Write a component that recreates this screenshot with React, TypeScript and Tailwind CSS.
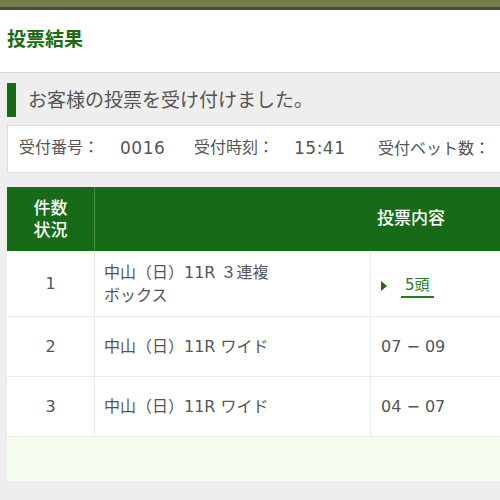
const rows = [
  { no: '1', race: '中山（日）11R ３連複', sub: 'ボックス', box: true, bet: '5頭', h: 'h-[66px]' },
  { no: '2', race: '中山（日）11R ワイド', bet: '07 − 09', h: 'h-[60px]' },
  { no: '3', race: '中山（日）11R ワイド', bet: '04 − 07', h: 'h-[60px]' },
];

export default function App() {
  return (
    <div
      className="w-[500px] h-[500px] overflow-hidden bg-[#eeeeee] text-[#555555]"
      style={{ fontFamily: '"DejaVu Sans", "Noto Sans CJK JP", sans-serif' }}
    >
      {/* top strip */}
      <div className="h-[10px] bg-[#777c4e] border-b-[3px] border-[#4a4b3d]" />

      {/* page title */}
      <div className="h-[63px] bg-white border-b border-[#d9d9d9] flex items-center px-[7px] pb-[3px]">
        <h1 className="text-[19px] font-bold text-[#1d6a12]">投票結果</h1>
      </div>

      <div className="w-[760px] pl-[7px]">
        {/* notice */}
        <div className="flex items-center mt-[10px] h-[34px]">
          <div className="w-[9px] h-[34px] bg-[#176a16]" />
          <p className="ml-[12px] text-[19px] leading-none">お客様の投票を受け付けました。</p>
        </div>

        {/* receipt info */}
        <div className="mt-[8px] h-[48px] bg-white border border-[#dddddd] flex items-center pl-[11px] text-[16px]">
          <div className="w-[175px] flex">
            <span className="w-[101px]">受付番号：</span>
            <span className="text-[17px] tracking-[0.5px]">0016</span>
          </div>
          <div className="w-[184px] flex">
            <span className="w-[100px]">受付時刻：</span>
            <span className="text-[17px] tracking-[0.5px]">15:41</span>
          </div>
          <div>受付ベット数：</div>
        </div>

        {/* table */}
        <div className="mt-[14px] bg-white">
          <div className="flex h-[64px] bg-[#176a16] text-white text-[17px] font-medium">
            <div className="w-[88px] border-r border-[#4d8c47] flex items-center justify-center text-center leading-[22px]">
              件数<br />状況
            </div>
            <div className="w-[632px] flex items-center justify-center">投票内容</div>
          </div>

          {rows.map((r) => (
            <div key={r.no} className={`flex ${r.h} border-b border-[#ececec] text-[16px]`}>
              <div className="w-[88px] border-r border-[#ececec] flex items-center justify-center">{r.no}</div>
              <div className="w-[276px] border-r border-[#ececec] flex flex-col justify-center pl-[9px] leading-[23px]">
                <span>{r.race}</span>
                {r.sub && <span>{r.sub}</span>}
              </div>
              <div className="flex-1 flex items-center pl-[10px]">
                {r.box ? (
                  <div className="flex items-center pt-[4px]">
                    <svg width="6" height="10" viewBox="0 0 6 10" className="mr-[14px]">
                      <path d="M0 0 L6 5 L0 10 Z" fill="#1d6a12" />
                    </svg>
                    <span className="text-[15px] text-[#2b7a22] border-b-[2px] border-[#2b7a22] px-[4px] leading-[22px]">
                      {r.bet}
                    </span>
                  </div>
                ) : (
                  <span>{r.bet}</span>
                )}
              </div>
            </div>
          ))}

          <div className="h-[44px] bg-[#f5fdee]" />
        </div>
      </div>
    </div>
  );
}
